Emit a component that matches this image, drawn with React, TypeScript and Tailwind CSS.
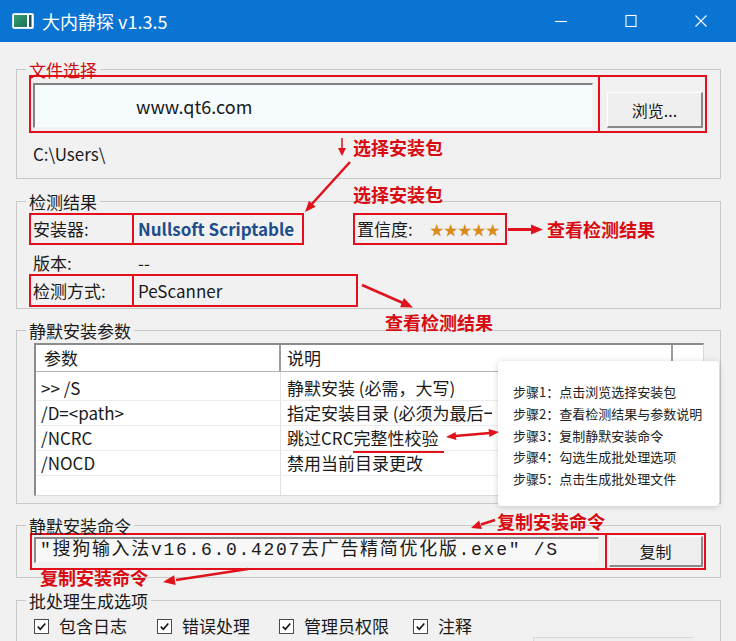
import type { ReactNode } from "react";

const rows: [string, string][] = [
  [">> /S", "静默安装 (必需，大写)"],
  ["/D=<path>", "指定安装目录 (必须为最后一个参数)"],
  ["/NCRC", "跳过CRC完整性校验"],
  ["/NOCD", "禁用当前目录更改"],
];

const steps = [
  "步骤1：点击浏览选择安装包",
  "步骤2：查看检测结果与参数说明",
  "步骤3：复制静默安装命令",
  "步骤4：勾选生成批处理选项",
  "步骤5：点击生成批处理文件",
];

const options = [
  { label: "包含日志", w: "w-[123px]" },
  { label: "错误处理", w: "w-[122px]" },
  { label: "管理员权限", w: "w-[134px]" },
  { label: "注释", w: "w-[80px]" },
];

function Group({
  title,
  className,
  titleClass = "",
  children,
}: {
  title: string;
  className: string;
  titleClass?: string;
  children: ReactNode;
}) {
  return (
    <div className={`ml-[16px] w-[705px] border border-[#c8c8c8] ${className}`}>
      <div className={`-mt-[10px] ml-[9px] w-fit bg-[#f1f1f1] px-[3px] text-[17px] leading-[20px] ${titleClass}`}>
        {title}
      </div>
      {children}
    </div>
  );
}

function AppIcon() {
  return (
    <svg width="22" height="16" viewBox="0 0 22 16" className="ml-[12px]">
      <defs>
        <linearGradient id="ic" x1="0" y1="0" x2="1" y2="1">
          <stop offset="0" stopColor="#35a172" />
          <stop offset="1" stopColor="#1b7358" />
        </linearGradient>
      </defs>
      <rect x="0.5" y="0.5" width="21" height="15" rx="1.5" fill="#ffffff" stroke="#d6e6f4" />
      <rect x="2" y="2" width="13" height="12" fill="url(#ic)" />
      <rect x="17" y="2" width="2.5" height="12" fill="#1d4f5c" />
    </svg>
  );
}

function WinButton({ kind }: { kind: "min" | "max" | "close" }) {
  return (
    <div className="flex h-[42px] w-[70px] items-center justify-center">
      <svg width="14" height="14" viewBox="0 0 14 14" stroke="#ffffff" strokeWidth="1.1" fill="none">
        {kind === "min" && <line x1="1" y1="7.5" x2="13" y2="7.5" />}
        {kind === "max" && <rect x="2" y="1.5" width="10" height="11" />}
        {kind === "close" && (
          <>
            <line x1="1.5" y1="1.5" x2="12.5" y2="12.5" />
            <line x1="12.5" y1="1.5" x2="1.5" y2="12.5" />
          </>
        )}
      </svg>
    </div>
  );
}

function Checkbox() {
  return (
    <span className="flex h-[15px] w-[15px] items-center justify-center border border-[#4a4a4a] bg-white">
      <svg width="11" height="11" viewBox="0 0 11 11" fill="none" stroke="#111" strokeWidth="1.6">
        <path d="M1.8 5.6 L4.3 8.2 L9.3 2.4" />
      </svg>
    </span>
  );
}

function Annotations() {
  const red = "#e0121b";
  return (
    <svg className="pointer-events-none absolute left-0 top-0" width="736" height="641">
      <line x1="342" y1="138" x2="342" y2="149" stroke={red} strokeWidth="1.5" />
      <polygon points="338,148 346,148 342,156" fill={red} />

      <line x1="350" y1="162" x2="311" y2="205" stroke={red} strokeWidth="2.5" />
      <polygon points="305,212 315.7,206.8 309,200.8" fill={red} />

      <line x1="508" y1="229.5" x2="532" y2="229.5" stroke={red} strokeWidth="3" />
      <polygon points="543,229.5 531,224.5 531,234.5" fill={red} />

      <line x1="362" y1="285" x2="403" y2="303" stroke={red} strokeWidth="2.5" />
      <polygon points="413,307.5 400,307.3 404,298.1" fill={red} />

      <line x1="353" y1="452" x2="444" y2="452" stroke={red} strokeWidth="2" />

      <line x1="455" y1="436" x2="490" y2="433" stroke={red} strokeWidth="2.5" />
      <polygon points="446,437 456.4,440 455.6,432" fill={red} />
      <polygon points="499,432 489.4,437 488.6,429" fill={red} />

      <line x1="495" y1="520" x2="481" y2="524.5" stroke={red} strokeWidth="2.5" />
      <polygon points="471,528 481.9,529.1 479.1,520.5" fill={red} />

      <line x1="248" y1="569" x2="176" y2="580" stroke={red} strokeWidth="2.5" />
      <polygon points="163,582 175.6,585.1 174.1,575.3" fill={red} />
    </svg>
  );
}

const note = "absolute text-[18px] font-bold leading-none text-[#d80a12]";

export default function App() {
  return (
    <div className="relative h-[641px] w-[736px] overflow-hidden bg-[#f1f1f1] font-['Noto_Sans_CJK_SC',sans-serif] text-[#1a1a1a]">
      {/* title bar */}
      <div className="flex h-[42px] items-center bg-[#0a74d2] text-white">
        <AppIcon />
        <span className="ml-[8px] text-[18px] leading-none">大内静探 v1.3.5</span>
        <div className="ml-auto flex">
          <WinButton kind="min" />
          <WinButton kind="max" />
          <WinButton kind="close" />
        </div>
      </div>

      <Group title="文件选择" titleClass="text-[#d00d14]" className="mt-[27px] h-[110px]">
        <div className="-mt-[5px] ml-[12px] flex h-[58px] w-[678px] border-2 border-[#e3101b]">
          <div className="ml-[2px] mt-[6px] flex h-[45px] w-[560px] items-center border-b border-l-2 border-r border-t-2 border-b-[#f4f4f4] border-l-[#828282] border-r-[#f4f4f4] border-t-[#828282] bg-[#f6fcfe] pl-[101px] text-[18px]">
            www.qt6.com
          </div>
          <div className="ml-[5px] w-[2px] bg-[#e3101b]" />
          <button className="ml-[7px] mt-[15px] h-[36px] w-[96px] border-b-2 border-l border-r-2 border-t border-b-[#8a8a8a] border-l-white border-r-[#8a8a8a] border-t-white bg-[#efefef] text-[16px]">
            浏览...
          </button>
        </div>
        <div className="ml-[16px] mt-[11px] text-[17px] leading-[20px]">C:\Users\</div>
      </Group>

      <Group title="检测结果" className="mt-[22px] h-[108px]">
        <div className="mt-[1px] flex h-[32px] text-[17px]">
          <div className="ml-[12px] flex w-[105px] items-center border-2 border-[#e3101b] pl-[2px]">安装器:</div>
          <div className="flex w-[170px] items-center border-2 border-l-0 border-[#e3101b] pl-[4px] font-bold text-[#1e4d8c]">
            Nullsoft Scriptable
          </div>
          <div className="ml-[49px] flex w-[154px] items-center border-2 border-[#e3101b] pl-[2px]">
            置信度:
            <span className="ml-[17px] text-[14px] leading-none text-[#d98b1e]">★★★★★</span>
          </div>
        </div>
        <div className="mt-[8px] flex h-[20px] text-[17px] leading-[20px]">
          <span className="ml-[16px] w-[105px]">版本:</span>
          <span>--</span>
        </div>
        <div className="mt-[1px] flex h-[33px] text-[17px]">
          <div className="ml-[12px] flex w-[105px] items-center border-2 border-[#e3101b] pl-[2px]">检测方式:</div>
          <div className="flex w-[224px] items-center border-2 border-l-0 border-[#e3101b] pl-[4px]">PeScanner</div>
        </div>
      </Group>

      <Group title="静默安装参数" className="mt-[21px] h-[174px]">
        <div className="ml-[17px] mt-[2px] flex h-[153px] w-[670px] flex-col overflow-hidden border-b border-l-2 border-r border-t-2 border-b-[#dadada] border-l-[#8c8c8c] border-r-[#dadada] border-t-[#8c8c8c] bg-white text-[17px]">
          <div className="flex h-[27px] shrink-0 items-center border-b border-[#b4b4b4]">
            <div className="h-full w-[245px] border-r-2 border-[#9c9c9c] pl-[8px] leading-[26px]">参数</div>
            <div className="h-full w-[392px] border-r-2 border-[#9c9c9c] pl-[6px] leading-[26px]">说明</div>
            <div className="flex-1" />
          </div>
          <div className="flex h-[4px] shrink-0">
            <div className="w-[245px] border-r border-[#e2e2e2]" />
          </div>
          {rows.map(([k, v]) => (
            <div key={k} className="flex h-[25px] shrink-0 border-b border-[#ececec] leading-[24px]">
              <div className="w-[245px] border-r border-[#e2e2e2] pl-[5px]">{k}</div>
              <div className="ml-[6px] w-[205px] overflow-hidden whitespace-nowrap">{v}</div>
            </div>
          ))}
          <div className="flex flex-1">
            <div className="w-[245px] border-r border-[#e2e2e2]" />
          </div>
        </div>
      </Group>

      <Group title="静默安装命令" className="mt-[21px] h-[53px]">
        <div className="-mt-[3px] ml-[13px] flex h-[37px] w-[676px] border-2 border-[#e3101b]">
          <div className="ml-[2px] mt-[2px] flex h-[26px] w-[565px] items-center whitespace-nowrap border-b border-l-2 border-r border-t-2 border-b-[#f0f0f0] border-l-[#8a8a8a] border-r-[#f0f0f0] border-t-[#8a8a8a] bg-[#f8f8f8] pl-[4px] font-['Liberation_Mono','Noto_Sans_CJK_SC',monospace] text-[18px] tracking-[1.7px]">
            "搜狗输入法v16.6.0.4207去广告精简优化版.exe" /S
          </div>
          <div className="ml-[6px] w-[2px] bg-[#e3101b]" />
          <button className="ml-[2px] mt-[1px] h-[31px] w-[94px] border-b-2 border-l border-r-2 border-t border-b-[#8a8a8a] border-l-white border-r-[#8a8a8a] border-t-white bg-[#efefef] text-[16px]">
            复制
          </button>
        </div>
      </Group>

      <Group title="批处理生成选项" className="mt-[22px] h-[80px]">
        <div className="ml-[17px] mt-[5px] flex h-[20px] items-center text-[17px] leading-[20px]">
          {options.map((o) => (
            <label key={o.label} className={`flex items-center ${o.w}`}>
              <Checkbox />
              <span className="ml-[10px]">{o.label}</span>
            </label>
          ))}
        </div>
        <div className="ml-[516px] mt-[1px] h-[30px] w-[160px] border-l border-t border-l-[#d8d8d8] border-t-[#d8d8d8] bg-[#efefef]" />
      </Group>

      {/* help popup */}
      <div className="absolute left-[498px] top-[361px] h-[145px] w-[221px] rounded-[3px] bg-white pl-[15px] pt-[20px] text-[13px] leading-[21.75px] text-[#222] shadow-[0_1px_6px_rgba(0,0,0,0.18)]">
        {steps.map((s) => (
          <div key={s} className="whitespace-nowrap">{s}</div>
        ))}
      </div>

      {/* red annotations */}
      <Annotations />
      <span className={`${note} left-[353px] top-[138px]`}>选择安装包</span>
      <span className={`${note} left-[353px] top-[185px]`}>选择安装包</span>
      <span className={`${note} left-[547px] top-[220px]`}>查看检测结果</span>
      <span className={`${note} left-[385px] top-[313px]`}>查看检测结果</span>
      <span className={`${note} left-[497px] top-[512px]`}>复制安装命令</span>
      <span className={`${note} left-[40px] top-[568px]`}>复制安装命令</span>
    </div>
  );
}
